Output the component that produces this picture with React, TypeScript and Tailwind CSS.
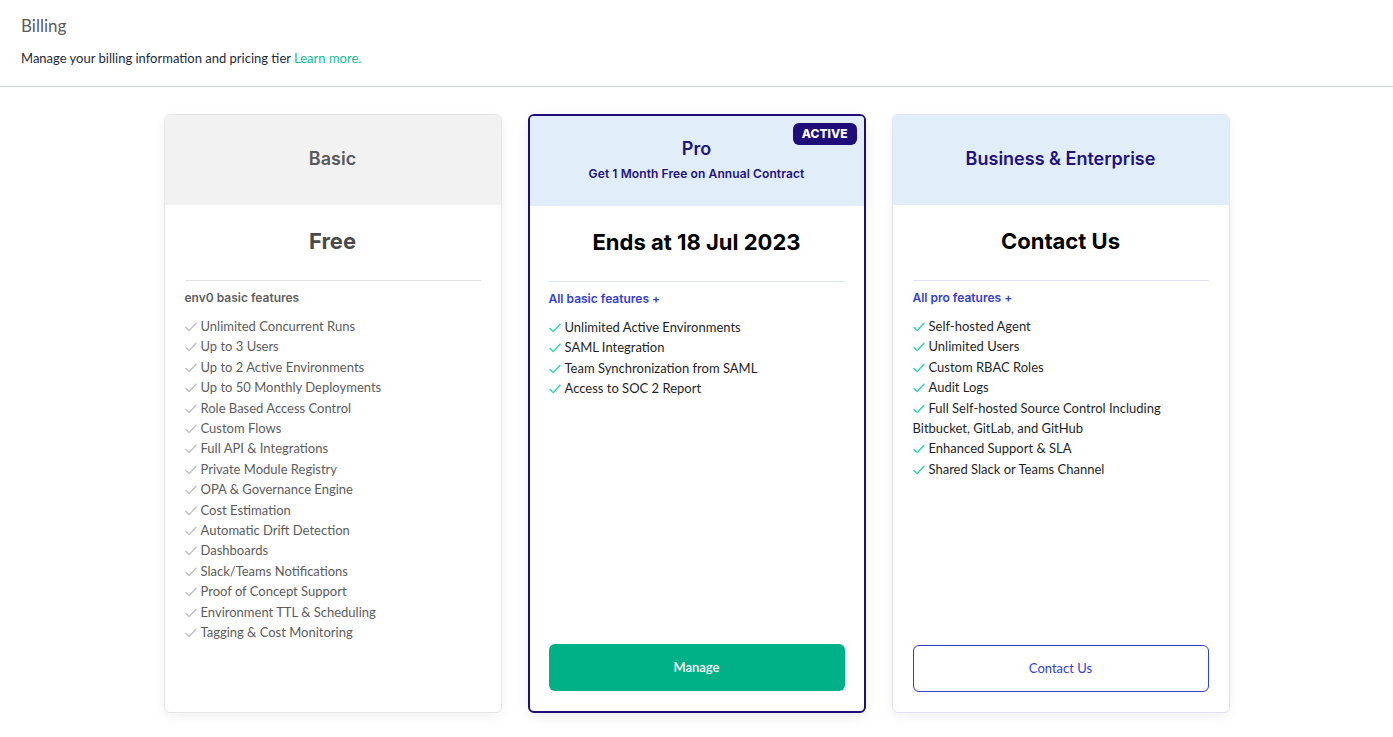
import React from "react";

const Check = ({ color }: { color: string }) => (
  <svg
    width="12"
    height="10"
    viewBox="0 0 12 10"
    className="inline-block mr-[4px] align-[-1px]"
    fill="none"
  >
    <polyline points="1,5.5 4.2,8.6 11,1.2" stroke={color} strokeWidth="1.3" strokeLinecap="round" strokeLinejoin="round" />
  </svg>
);

const basicFeatures = [
  "Unlimited Concurrent Runs",
  "Up to 3 Users",
  "Up to 2 Active Environments",
  "Up to 50 Monthly Deployments",
  "Role Based Access Control",
  "Custom Flows",
  "Full API & Integrations",
  "Private Module Registry",
  "OPA & Governance Engine",
  "Cost Estimation",
  "Automatic Drift Detection",
  "Dashboards",
  "Slack/Teams Notifications",
  "Proof of Concept Support",
  "Environment TTL & Scheduling",
  "Tagging & Cost Monitoring",
];

const proFeatures = [
  "Unlimited Active Environments",
  "SAML Integration",
  "Team Synchronization from SAML",
  "Access to SOC 2 Report",
];

const bizFeatures = [
  "Self-hosted Agent",
  "Unlimited Users",
  "Custom RBAC Roles",
  "Audit Logs",
  "Full Self-hosted Source Control Including Bitbucket, GitLab, and GitHub",
  "Enhanced Support & SLA",
  "Shared Slack or Teams Channel",
];

const H = { fontFamily: "Inter, 'Open Sans', sans-serif" };

export default function App() {
  return (
    <div className="min-h-screen bg-white" style={{ fontFamily: "Lato, 'Open Sans', sans-serif" }}>
      <div className="px-[21px] pt-[15px] pb-[19px] border-b border-[#c9d4dd]">
        <h1 className="text-[17px] leading-[22px] text-[#5a5a5a]">Billing</h1>
        <p className="mt-[12px] text-[13px] leading-[18px] text-[#1e2a3a]">
          Manage your billing information and pricing tier <span className="text-[#13c08f]">Learn more.</span>
        </p>
      </div>

      <div className="flex justify-center gap-[26px] pt-[27px]">
        {/* Basic */}
        <div className="w-[338px] h-[599px] rounded-[6px] border border-[#e6e6e6] bg-white shadow-[0_4px_12px_rgba(0,0,0,0.06)] overflow-hidden flex flex-col">
          <div className="h-[90px] bg-[#f2f2f2] flex items-center justify-center">
            <span style={H} className="text-[18px] font-semibold text-[#595959] -mt-[3px]">Basic</span>
          </div>
          <div className="px-[20px] flex flex-col">
            <div style={H} className="pt-[21px] pb-[24px] text-center text-[22px] leading-[30px] font-bold text-[#4a4a4a] border-b border-[#e3e3e3]">Free</div>
            <div style={H} className="mt-[9px] text-[12px] leading-[16px] font-semibold text-[#5f5f5f]">env0 basic features</div>
            <ul className="mt-[10px]">
              {basicFeatures.map((f) => (
                <li key={f} className="text-[13px] leading-[20.4px] text-[#5c5c5c]">
                  <Check color="#bdbdbd" />
                  {f}
                </li>
              ))}
            </ul>
          </div>
        </div>

        {/* Pro */}
        <div className="relative w-[338px] h-[599px] rounded-[6px] border-2 border-[#1e0d78] bg-white shadow-[0_4px_14px_rgba(0,0,0,0.08)] overflow-hidden flex flex-col">
          <div style={H} className="absolute top-[7px] right-[7px] bg-[#1e0d78] text-white text-[12px] font-extrabold leading-[22px] px-[9px] rounded-[6px]">ACTIVE</div>
          <div className="h-[90px] bg-[#e1eef9] flex flex-col items-center justify-center">
            <span style={H} className="text-[18px] leading-[22px] font-semibold text-[#22127c] -mt-[2px]">Pro</span>
            <span style={H} className="text-[12px] leading-[16px] font-semibold text-[#22127c] mt-[6px] tracking-[0.1px]">Get 1 Month Free on Annual Contract</span>
          </div>
          <div className="px-[19px] flex flex-col flex-1">
            <div style={H} className="pt-[21px] pb-[24px] text-center text-[22px] leading-[30px] font-bold text-black border-b border-[#dde3ef]">Ends at 18 Jul 2023</div>
            <div style={H} className="mt-[9px] text-[12px] leading-[16px] font-semibold text-[#3340d0]">All basic features +</div>
            <ul className="mt-[10px]">
              {proFeatures.map((f) => (
                <li key={f} className="text-[13px] leading-[20.4px] text-[#1f1f1f]">
                  <Check color="#1fd8a8" />
                  {f}
                </li>
              ))}
            </ul>
            <button className="mt-auto mb-[20px] h-[47px] w-full rounded-[6px] bg-[#00b087] text-white text-[13px] font-semibold">Manage</button>
          </div>
        </div>

        {/* Business */}
        <div className="w-[338px] h-[599px] rounded-[6px] border border-[#e2e2f0] bg-white shadow-[0_4px_12px_rgba(0,0,0,0.06)] overflow-hidden flex flex-col">
          <div className="h-[90px] bg-[#e1eef9] flex items-center justify-center">
            <span style={H} className="text-[18px] font-semibold text-[#22127c] -mt-[3px]">Business &amp; Enterprise</span>
          </div>
          <div className="px-[20px] flex flex-col flex-1">
            <div style={H} className="pt-[21px] pb-[24px] text-center text-[22px] leading-[30px] font-bold text-black border-b border-[#dde3ef]">Contact Us</div>
            <div style={H} className="mt-[9px] text-[12px] leading-[16px] font-semibold text-[#3340d0]">All pro features +</div>
            <ul className="mt-[10px]">
              {bizFeatures.map((f) => (
                <li key={f} className="text-[13px] leading-[20.4px] text-[#1f1f1f]">
                  <Check color="#1fd8a8" />
                  {f}
                </li>
              ))}
            </ul>
            <button className="mt-auto mb-[20px] h-[47px] w-full rounded-[6px] border border-[#3340d0] bg-white text-[#3340d0] text-[13px]">Contact Us</button>
          </div>
        </div>
      </div>
    </div>
  );
}
